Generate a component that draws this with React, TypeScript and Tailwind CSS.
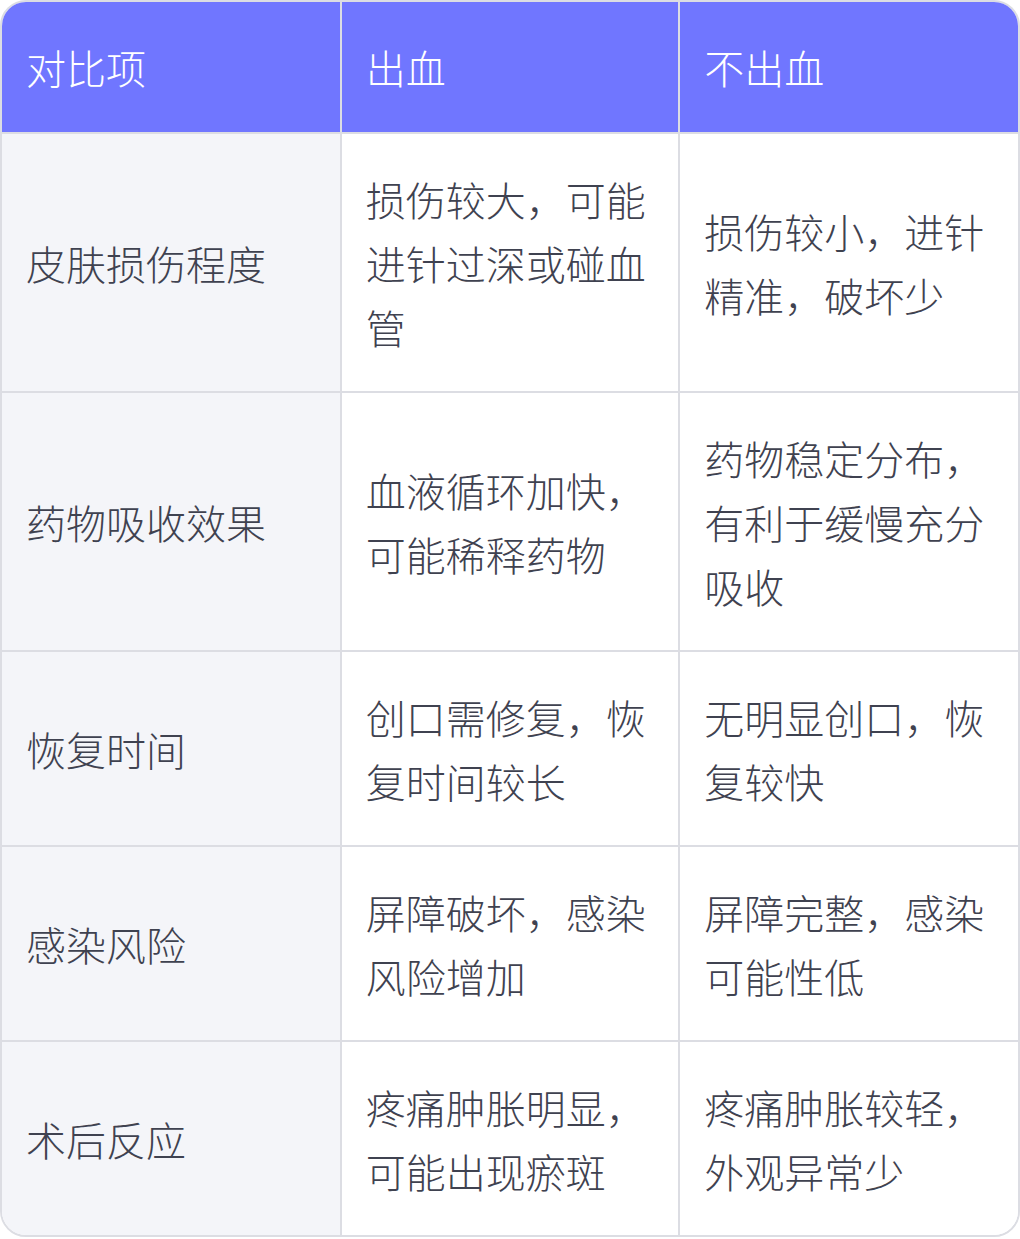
const headers = ['对比项', '出血', '不出血'];

const rows: [string, string, string][] = [
  ['皮肤损伤程度', '损伤较大，可能进针过深或碰血管', '损伤较小，进针精准，破坏少'],
  ['药物吸收效果', '血液循环加快，可能稀释药物', '药物稳定分布，有利于缓慢充分吸收'],
  ['恢复时间', '创口需修复，恢复时间较长', '无明显创口，恢复较快'],
  ['感染风险', '屏障破坏，感染风险增加', '屏障完整，感染可能性低'],
  ['术后反应', '疼痛肿胀明显，可能出现瘀斑', '疼痛肿胀较轻，外观异常少'],
];

export default function App() {
  return (
    <div className="w-[1020px] bg-white font-['Noto_Sans_CJK_SC','Noto_Sans',sans-serif] font-light">
      <div className="overflow-hidden rounded-[26px] border-2 border-[#dcdde3]">
        <table className="w-full table-fixed border-collapse text-[40px] leading-[64px]">
          <thead>
            <tr className="bg-[#7076ff] text-white">
              {headers.map((h, i) => (
                <th
                  key={h}
                  className={`w-1/3 border-b-2 border-[#dcdde3] px-6 py-[33px] text-left font-light ${
                    i > 0 ? 'border-l-2' : ''
                  }`}
                >
                  {h}
                </th>
              ))}
            </tr>
          </thead>
          <tbody className="text-[#3f4250]">
            {rows.map((r, ri) => (
              <tr key={r[0]} className={ri < rows.length - 1 ? 'border-b-2 border-[#dcdde3]' : ''}>
                <td className="bg-[#f4f5f9] px-6 py-[32.5px] align-middle">{r[0]}</td>
                <td className="border-l-2 border-[#dcdde3] bg-white px-6 py-[32.5px] align-middle">{r[1]}</td>
                <td className="border-l-2 border-[#dcdde3] bg-white px-6 py-[32.5px] align-middle">{r[2]}</td>
              </tr>
            ))}
          </tbody>
        </table>
      </div>
    </div>
  );
}
